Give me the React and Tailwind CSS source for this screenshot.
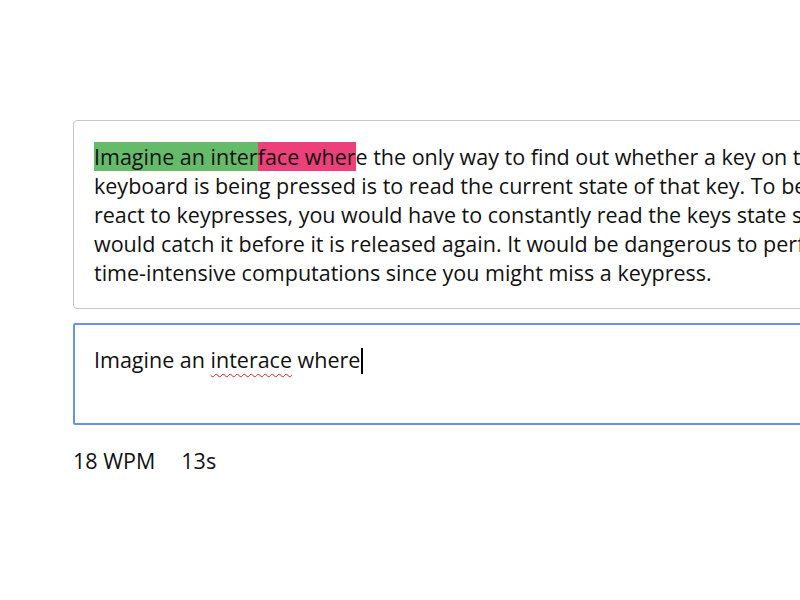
import React from "react";

const LINES = [
  "the only way to find out whether a key on the",
  "keyboard is being pressed is to read the current state of that key. To be able to",
  "react to keypresses, you would have to constantly read the keys state so you",
  "would catch it before it is released again. It would be dangerous to perform other",
  "time-intensive computations since you might miss a keypress.",
];

export default function App() {
  return (
    <div
      className="w-[800px] h-[600px] overflow-hidden bg-white text-[#111]"
      style={{ fontFamily: '"Open Sans", sans-serif' }}
    >
      <div className="pl-[73px] pt-[120px] w-[1000px]">
        {/* Source text */}
        <div className="border border-[#c8c8c8] rounded-[4px] px-5 py-[21px] text-[21.5px] leading-[29px] whitespace-nowrap">
          <div>
            <span className="bg-[#66bb6a]">Imagine an inter</span>
            <span className="bg-[#ec407a]">face wher</span>e {LINES[0]}
          </div>
          {LINES.slice(1).map((l) => (
            <div key={l}>{l}</div>
          ))}
        </div>

        {/* Typing input */}
        <div className="mt-[14px] h-[102px] border-2 border-[#6393ee] rounded-[2px] px-[19px] pt-[20px] text-[21.5px] leading-[29px] whitespace-nowrap">
          <span>Imagine an </span>
          <span className="underline decoration-wavy decoration-[#e02020] underline-offset-[5px]" style={{ textDecorationThickness: "1px" }}>
            interace
          </span>
          <span> where</span>
          <span className="inline-block w-[2px] h-[26px] bg-black align-[-6px] ml-[1px]" />
        </div>

        {/* Stats */}
        <div className="mt-[21px] flex gap-[26px] text-[21.5px] leading-[29px]">
          <span>18 WPM</span>
          <span>13s</span>
        </div>
      </div>
    </div>
  );
}
